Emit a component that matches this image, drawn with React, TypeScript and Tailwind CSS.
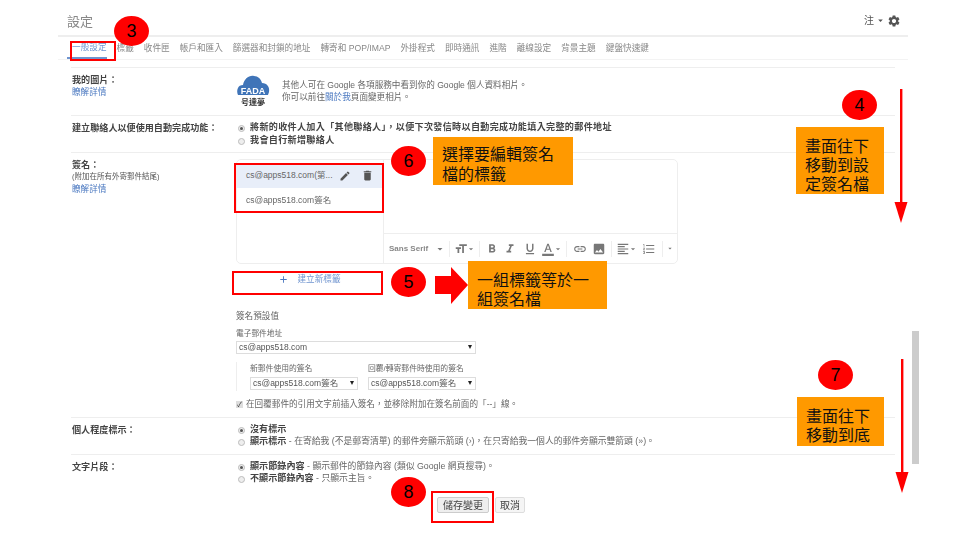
import {
  MdAdd,
  MdArrowDropDown,
  MdDelete,
  MdEdit,
  MdFormatAlignLeft,
  MdFormatBold,
  MdFormatColorText,
  MdFormatItalic,
  MdFormatListNumbered,
  MdFormatSize,
  MdFormatUnderlined,
  MdImage,
  MdLink,
  MdSettings,
} from "react-icons/md";

const tabs = [
  "一般設定",
  "標籤",
  "收件匣",
  "帳戶和匯入",
  "篩選器和封鎖的地址",
  "轉寄和 POP/IMAP",
  "外掛程式",
  "即時通訊",
  "進階",
  "離線設定",
  "背景主題",
  "鍵盤快速鍵",
];

function Logo() {
  return (
    <svg width="34" height="32" viewBox="0 0 34 32">
      <path
        d="M2 21c-2-5 0-10 5-10 1-6 6-10 11-9 4 0 7 3 8 7 5 0 8 4 7 9l-1 3z"
        fill="#3f74b8"
      />
      <text x="17" y="20" textAnchor="middle" fontSize="9" fontWeight="700" fill="#fff" fontFamily="Liberation Sans">
        FADA
      </text>
      <text x="17" y="31" textAnchor="middle" fontSize="8" fontWeight="700" fill="#333" fontFamily="Noto Sans CJK TC">
        号達夢
      </text>
    </svg>
  );
}

function Radio({ on }: { on?: boolean }) {
  return (
    <span className="flex h-[7px] w-[7px] shrink-0 items-center justify-center rounded-full border border-[#bbb] bg-[#eee]">
      {on && <span className="h-[3px] w-[3px] rounded-full bg-[#555]" />}
    </span>
  );
}

function RadioLine({ on, children }: { on?: boolean; children: React.ReactNode }) {
  return (
    <div className="flex h-[12px] items-center gap-[5px] pl-[3px]">
      <Radio on={on} />
      <span className="whitespace-nowrap">{children}</span>
    </div>
  );
}

function Strong({ children }: { children: React.ReactNode }) {
  return <span className="text-[9.1px] font-bold text-[#444]">{children}</span>;
}

function Row({
  label,
  sub,
  link,
  border = true,
  className,
  children,
}: {
  label: string;
  sub?: string;
  link?: boolean;
  border?: boolean;
  className: string;
  children: React.ReactNode;
}) {
  return (
    <div className={`grid grid-cols-[164px_1fr] ${border ? "border-b border-[#eee]" : ""} ${className}`}>
      <div className="pl-px leading-[12px]">
        <div className="text-[9.1px] font-bold text-[#444]">{label}</div>
        {sub && <div className="text-[7.5px] text-[#555]">{sub}</div>}
        {link && <div className="text-[#4a78c0]">瞭解詳情</div>}
      </div>
      <div>{children}</div>
    </div>
  );
}

function Select({ value, className }: { value: string; className: string }) {
  return (
    <div
      className={`flex h-[13px] items-center justify-between border border-[#ddd] bg-white pl-[2px] pr-[3px] text-[8.5px] text-[#555] ${className}`}
    >
      <span className="whitespace-nowrap">{value}</span>
      <span className="h-0 w-0 border-x-[2.5px] border-t-[4px] border-x-transparent border-t-[#222]" />
    </div>
  );
}

function ToolBtn({ w, children }: { w: string; children: React.ReactNode }) {
  return <div className={`flex items-center justify-center ${w}`}>{children}</div>;
}

function Divider() {
  return <div className="mx-[3px] h-[16px] w-px shrink-0 bg-[#eee]" />;
}

function SignaturePanel() {
  return (
    <div className="flex h-[105px] w-[442px] overflow-hidden rounded-[5px] border border-[#eee]">
      <div className="w-[147px] shrink-0 border-r border-[#eee] pt-[3px] text-[8.5px] text-[#666]">
        <div className="flex h-[25px] items-center bg-[#e8eef9] pl-[9px]">
          <span>cs@apps518.com(第...</span>
          <MdEdit className="ml-[6px] text-[#555]" size={12} />
          <MdDelete className="ml-[10px] text-[#555]" size={13} />
        </div>
        <div className="flex h-[24px] items-center pl-[9px]">cs@apps518.com簽名</div>
      </div>
      <div className="flex flex-1 flex-col justify-end">
        <div className="flex h-[30px] items-center border-t border-[#eee] pl-[5px] text-[#777]">
          <span className="w-[45px] text-[8px] font-bold text-[#888]">Sans Serif</span>
          <ToolBtn w="w-[12px]"><MdArrowDropDown size={12} /></ToolBtn>
          <Divider />
          <ToolBtn w="w-[23px]"><MdFormatSize size={14} /><MdArrowDropDown className="-ml-[2px]" size={10} /></ToolBtn>
          <Divider />
          <ToolBtn w="w-[17px]"><MdFormatBold size={14} /></ToolBtn>
          <ToolBtn w="w-[20px]"><MdFormatItalic size={14} /></ToolBtn>
          <ToolBtn w="w-[20px]"><MdFormatUnderlined size={14} /></ToolBtn>
          <ToolBtn w="w-[23px]"><MdFormatColorText size={14} /><MdArrowDropDown className="-ml-[2px]" size={10} /></ToolBtn>
          <Divider />
          <ToolBtn w="w-[19px]"><MdLink size={14} /></ToolBtn>
          <ToolBtn w="w-[19px]"><MdImage size={14} /></ToolBtn>
          <Divider />
          <ToolBtn w="w-[24px]"><MdFormatAlignLeft size={14} /><MdArrowDropDown className="-ml-[2px]" size={10} /></ToolBtn>
          <ToolBtn w="w-[20px]"><MdFormatListNumbered size={14} /></ToolBtn>
          <Divider />
          <ToolBtn w="w-[8px]"><MdArrowDropDown size={11} /></ToolBtn>
        </div>
      </div>
    </div>
  );
}

function GmailSettings() {
  return (
    <div className="ml-[58px] w-[850px] blur-[0.6px]">
      <div className="flex h-[37px] items-center justify-between border-b-2 border-[#eee] pl-[9px] pr-[7px] pt-[6px]">
        <span className="mt-[3px] text-[13px] text-[#888]">設定</span>
        <div className="flex items-center text-[10px] text-[#555]">
          注
          <MdArrowDropDown className="ml-[1px]" size={11} />
          <MdSettings className="ml-[1px]" size={14} />
        </div>
      </div>

      <div className="flex h-[23px] items-stretch gap-[10px] border-b border-[#f3f3f3] pl-[9px] text-[8.65px] text-[#888]">
        {tabs.map((tab, i) => (
          <span
            key={tab}
            className={`flex items-center whitespace-nowrap pt-[1px] ${
              i === 0 ? "border-b-2 border-[#6f94cf] pl-[5px] text-[#6f94cf]" : ""
            }`}
          >
            {tab}
          </span>
        ))}
      </div>

      <div className="ml-[13px] mt-[7px] w-[824px] border-t border-[#eee] text-[8.6px] text-[#666]">
        <Row label="我的圖片：" link className="h-[48px] pt-[6px]">
          <div className="flex items-start gap-[12px] pl-[1px] leading-[12px]">
            <Logo />
            <div className="pt-[5px]">
              <div>其他人可在 Google 各項服務中看到你的 Google 個人資料相片。</div>
              <div>
                你可以前往<span className="text-[#4a78c0]">關於我</span>頁面變更相片。
              </div>
            </div>
          </div>
        </Row>

        <Row label="建立聯絡人以便使用自動完成功能：" className="h-[37px] pt-[6px]">
          <div className="flex flex-col gap-px tracking-[0.3px]">
            <RadioLine on>
              <Strong>將新的收件人加入「其他聯絡人」，以便下次發信時以自動完成功能填入完整的郵件地址</Strong>
            </RadioLine>
            <RadioLine>
              <Strong>我會自行新增聯絡人</Strong>
            </RadioLine>
          </div>
        </Row>

        <Row label="簽名：" sub="(附加在所有外寄郵件結尾)" link className="h-[265px] pt-[6px]">
          <div className="pl-px">
            <SignaturePanel />
            <div className="mt-[8px] flex h-[22px] w-[146px] items-center justify-center gap-[5px] border-b border-[#eee] pb-[6px] text-[#6f94cf]">
              <MdAdd size={11} className="text-[#4a78c0]" />
              <span className="ml-[4px] text-[8.6px]">建立新標籤</span>
            </div>
            <div className="mt-[16px] text-[8.6px]">簽名預設值</div>
            <div className="mt-[5px] text-[7.7px] leading-[12px]">電子郵件地址</div>
            <Select value="cs@apps518.com" className="mt-[1px] w-[240px]" />
            <div className="mt-[8px] flex h-[29px] w-[240px] gap-[10px] border-l border-[#eee] pl-[13px] text-[7.8px]">
              <div>
                <div className="h-[15px] leading-[14px]">新郵件使用的簽名</div>
                <Select value="cs@apps518.com簽名" className="w-[108px]" />
              </div>
              <div>
                <div className="h-[15px] leading-[14px]">回覆/轉寄郵件時使用的簽名</div>
                <Select value="cs@apps518.com簽名" className="w-[108px]" />
              </div>
            </div>
            <div className="mt-[7px] flex items-center gap-[3px] text-[8.6px]">
              <span className="flex h-[7px] w-[7px] items-center justify-center bg-[#ddd] text-[7px] leading-none text-[#333]">
                ✓
              </span>
              在回覆郵件的引用文字前插入簽名，並移除附加在簽名前面的「--」線。
            </div>
          </div>
        </Row>

        <Row label="個人程度標示：" className="h-[37px] pt-[6px]">
          <RadioLine on>
            <Strong>沒有標示</Strong>
          </RadioLine>
          <RadioLine>
            <Strong>顯示標示</Strong>
            <span className="text-[8.8px]"> - 在寄給我 (不是郵寄清單) 的郵件旁顯示箭頭 (›)，在只寄給我一個人的郵件旁顯示雙箭頭 (»)。</span>
          </RadioLine>
        </Row>

        <Row label="文字片段：" border={false} className="h-[37px] pt-[6px]">
          <RadioLine on>
            <Strong>顯示節錄內容</Strong>
            <span className="text-[8.8px]"> - 顯示郵件的節錄內容 (類似 Google 網頁搜尋)。</span>
          </RadioLine>
          <RadioLine>
            <Strong>不顯示節錄內容</Strong>
            <span className="text-[8.8px]"> - 只顯示主旨。</span>
          </RadioLine>
        </Row>

        <div className="ml-[366px] mt-[5px] flex gap-[6px] text-[10px] text-[#444]">
          <button className="h-[16px] w-[52px] rounded-[2px] border border-[#ccc] bg-[#eee]">儲存變更</button>
          <button className="h-[16px] w-[30px] rounded-[2px] border border-[#ddd] bg-[#f5f5f5]">取消</button>
        </div>
      </div>
    </div>
  );
}

function Step({ n, className }: { n: number; className: string }) {
  return (
    <div
      className={`absolute flex h-[30px] w-[35px] items-center justify-center rounded-[50%] bg-[#ff0000] text-[18px] text-black ${className}`}
    >
      {n}
    </div>
  );
}

function Note({ lines, className }: { lines: string[]; className: string }) {
  return (
    <div className={`absolute bg-[#ff9900] pl-[9px] text-[16px] text-[#111] ${className}`}>
      {lines.map((line) => (
        <div key={line} className="whitespace-nowrap">
          {line}
        </div>
      ))}
    </div>
  );
}

function Outline({ className }: { className: string }) {
  return <div className={`absolute border-2 border-[#ff0000] ${className}`} />;
}

function DownArrow({ className }: { className: string }) {
  return (
    <svg className={`absolute ${className}`} width="14" height="134" viewBox="0 0 14 134">
      <rect x="6" y="0" width="2.4" height="115" fill="#ff0000" />
      <path d="M0.5 113h13L7 134z" fill="#ff0000" />
    </svg>
  );
}

export default function App() {
  return (
    <div className="relative h-[540px] w-[960px] overflow-hidden bg-white font-['Liberation_Sans','Noto_Sans_CJK_TC',sans-serif]">
      <GmailSettings />

      <Outline className="left-[70px] top-[41px] h-[20px] w-[46px]" />
      <Outline className="left-[234px] top-[163px] h-[50px] w-[150px]" />
      <Outline className="left-[232px] top-[271px] h-[24px] w-[151px]" />
      <Outline className="left-[431px] top-[491px] h-[32px] w-[63px]" />

      <Step n={3} className="left-[114px] top-[16px]" />
      <Step n={4} className="left-[842px] top-[90px]" />
      <Step n={6} className="left-[391px] top-[146px]" />
      <Step n={5} className="left-[391px] top-[267px]" />
      <Step n={7} className="left-[818px] top-[360px]" />
      <Step n={8} className="left-[391px] top-[477px]" />

      <Note lines={["選擇要編輯簽名", "檔的標籤"]} className="left-[433px] top-[137px] h-[48px] w-[140px] pt-[8px] leading-[20px]" />
      <Note lines={["一組標籤等於一", "組簽名檔"]} className="left-[468px] top-[261px] h-[48px] w-[139px] pt-[10px] leading-[19px]" />
      <Note lines={["畫面往下", "移動到設", "定簽名檔"]} className="left-[796px] top-[127px] h-[67px] w-[88px] pt-[10px] leading-[19px]" />
      <Note lines={["畫面往下", "移動到底"]} className="left-[797px] top-[397px] h-[49px] w-[87px] pt-[10px] leading-[19px]" />

      <svg className="absolute left-[435px] top-[267px]" width="33" height="37" viewBox="0 0 33 37">
        <path d="M0 9h16V0l17 18-17 19V27H0z" fill="#ff0000" />
      </svg>

      <DownArrow className="left-[894px] top-[89px]" />
      <DownArrow className="left-[895px] top-[359px]" />

      <div className="absolute left-[912px] top-[331px] h-[133px] w-[7px] bg-[#cccccc]" />
    </div>
  );
}
